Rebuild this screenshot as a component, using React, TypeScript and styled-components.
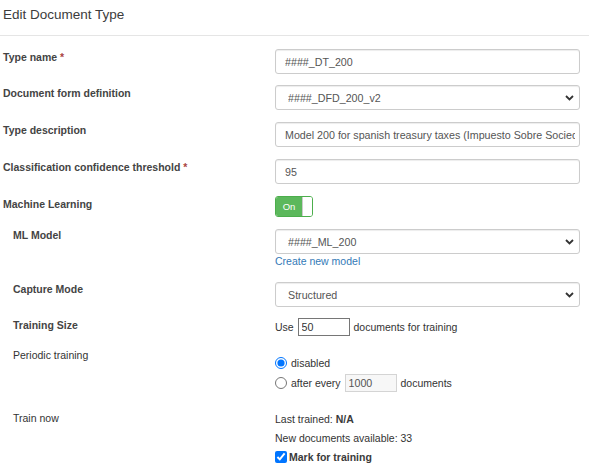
import styled, { createGlobalStyle } from "styled-components";

const GlobalStyle = createGlobalStyle`
  html, body {
    margin: 0;
    padding: 0;
    background: #fff;
  }
  body {
    font-family: "Liberation Sans", Arial, sans-serif;
    color: #333;
  }
`;

const Page = styled.div`
  width: 589px;
`;

const Header = styled.h4`
  margin: 0;
  padding: 5px 3px 10px;
  font-size: 13.5px;
  line-height: 20px;
  font-weight: normal;
  color: #3c3c3c;
  border-bottom: 1px solid #e5e5e5;
`;

const Form = styled.div`
  display: flex;
  flex-direction: column;
  padding: 13px 9px 0 3px;
`;

const Row = styled.div<{ $mb?: number; $indent?: boolean }>`
  display: grid;
  grid-template-columns: ${(p) => (p.$indent ? 262 : 272)}px 305px;
  padding-left: ${(p) => (p.$indent ? 10 : 0)}px;
  margin-bottom: ${(p) => p.$mb ?? 12}px;
  align-items: start;
`;

const Label = styled.label<{ $top?: number; $bold?: boolean }>`
  font-size: 10.5px;
  line-height: 14px;
  font-weight: ${(p) => (p.$bold === false ? "normal" : "bold")};
  color: ${(p) => (p.$bold === false ? "#333" : "#444")};
  margin-top: ${(p) => p.$top ?? 1}px;
`;

const Star = styled.span`
  color: #a94442;
`;

const Control = styled.div<{ $top?: number }>`
  display: flex;
  flex-direction: column;
  margin-top: ${(p) => p.$top ?? 0}px;
`;

const TextInput = styled.input`
  box-sizing: border-box;
  width: 305px;
  height: 25px;
  margin: 0;
  padding: 0 4px 0 9px;
  border: 1px solid #ccc;
  border-radius: 3px;
  box-shadow: inset 0 1px 1px rgba(0, 0, 0, 0.075);
  font-family: "Liberation Sans", Arial, sans-serif;
  font-size: 10.7px;
  color: #555;
  background: #fff;
  outline: none;
`;

const SelectWrap = styled.div`
  position: relative;
  width: 305px;
  height: 25px;
`;

const Select = styled.select`
  box-sizing: border-box;
  width: 100%;
  height: 25px;
  margin: 0;
  padding: 0 20px 0 12px;
  border: 1px solid #ccc;
  border-radius: 3px;
  box-shadow: inset 0 1px 1px rgba(0, 0, 0, 0.075);
  appearance: none;
  -webkit-appearance: none;
  font-family: "Liberation Sans", Arial, sans-serif;
  font-size: 10.7px;
  color: #555;
  background: #fff;
  outline: none;
`;

const Chevron = styled.svg`
  position: absolute;
  right: 6px;
  top: 10px;
  pointer-events: none;
`;

const Toggle = styled.div`
  display: flex;
  box-sizing: border-box;
  width: 38px;
  height: 21px;
  border: 1px solid #4cae4c;
  border-radius: 3px;
  overflow: hidden;
`;

const ToggleOn = styled.span`
  flex: 1;
  display: flex;
  align-items: center;
  justify-content: center;
  background: #5cb85c;
  color: #fff;
  font-size: 9.5px;
`;

const ToggleKnob = styled.span`
  width: 9px;
  background: #fff;
  border-left: 1px solid #ccc;
`;

const Link = styled.a`
  font-size: 10.5px;
  line-height: 15px;
  color: #337ab7;
  text-decoration: none;
  cursor: pointer;
`;

const Line = styled.div<{ $h?: number }>`
  display: flex;
  align-items: center;
  height: ${(p) => p.$h ?? 19}px;
  font-size: 10.5px;
  color: #333;
  white-space: pre;
`;

const SmallInput = styled.input`
  box-sizing: border-box;
  width: 52px;
  height: 18px;
  margin: 0 1px;
  padding: 0 3px;
  border: 1px solid #767676;
  border-radius: 0;
  font-family: "Liberation Sans", Arial, sans-serif;
  font-size: 10.7px;
  color: #333;
  background: #fff;
  outline: none;

  &:disabled {
    border-color: #d4d4d4;
    background: #f7f7f7;
    color: #555;
  }
`;

const Radio = styled.input`
  width: 12px;
  height: 12px;
  margin: 0 4px 0 0;
  accent-color: #0075ff;
`;

const Check = styled.input`
  width: 12px;
  height: 12px;
  margin: 0 2px 0 0;
  accent-color: #0075ff;
`;

const Strong = styled.b`
  font-weight: bold;
  color: #3a3a3a;
`;

function Dropdown({ value }: { value: string }) {
  return (
    <SelectWrap>
      <Select defaultValue={value}>
        <option>{value}</option>
      </Select>
      <Chevron width="9" height="6" viewBox="0 0 9 6">
        <path d="M1 1 L4.5 4.5 L8 1" fill="none" stroke="#333" strokeWidth="1.8" />
      </Chevron>
    </SelectWrap>
  );
}

export default function App() {
  return (
    <Page>
      <GlobalStyle />
      <Header>Edit Document Type</Header>
      <Form>
        <Row $mb={11}>
          <Label>
            Type name <Star>*</Star>
          </Label>
          <TextInput defaultValue="####_DT_200" />
        </Row>
        <Row>
          <Label>Document form definition</Label>
          <Dropdown value="####_DFD_200_v2" />
        </Row>
        <Row>
          <Label>Type description</Label>
          <TextInput defaultValue="Model 200 for spanish treasury taxes (Impuesto Sobre Sociedades)" />
        </Row>
        <Row>
          <Label>
            Classification confidence threshold <Star>*</Star>
          </Label>
          <TextInput defaultValue="95" />
        </Row>
        <Row>
          <Label>Machine Learning</Label>
          <Toggle>
            <ToggleOn>On</ToggleOn>
            <ToggleKnob />
          </Toggle>
        </Row>
        <Row $indent $mb={13}>
          <Label $top={-1}>ML Model</Label>
          <Control>
            <Dropdown value="####_ML_200" />
            <Link>Create new model</Link>
          </Control>
        </Row>
        <Row $indent $mb={11}>
          <Label $top={0}>Capture Mode</Label>
          <Dropdown value="Structured" />
        </Row>
        <Row $indent $mb={10}>
          <Label $top={0}>Training Size</Label>
          <Line $h={18}>
            Use <SmallInput defaultValue="50" /> documents for training
          </Line>
        </Row>
        <Row $indent $mb={16}>
          <Label $top={2} $bold={false}>
            Periodic training
          </Label>
          <Control $top={7}>
            <Line $h={20}>
              <Radio type="radio" name="periodic" defaultChecked />
              disabled
            </Line>
            <Line $h={20}>
              <Radio type="radio" name="periodic" />
              after every <SmallInput defaultValue="1000" disabled /> documents
            </Line>
          </Control>
        </Row>
        <Row $indent $mb={0}>
          <Label $top={2} $bold={false}>
            Train now
          </Label>
          <Control>
            <Line>
              Last trained: <Strong>N/A</Strong>
            </Line>
            <Line>New documents available: 33</Line>
            <Line>
              <Check type="checkbox" defaultChecked />
              <Strong>Mark for training</Strong>
            </Line>
          </Control>
        </Row>
      </Form>
    </Page>
  );
}
